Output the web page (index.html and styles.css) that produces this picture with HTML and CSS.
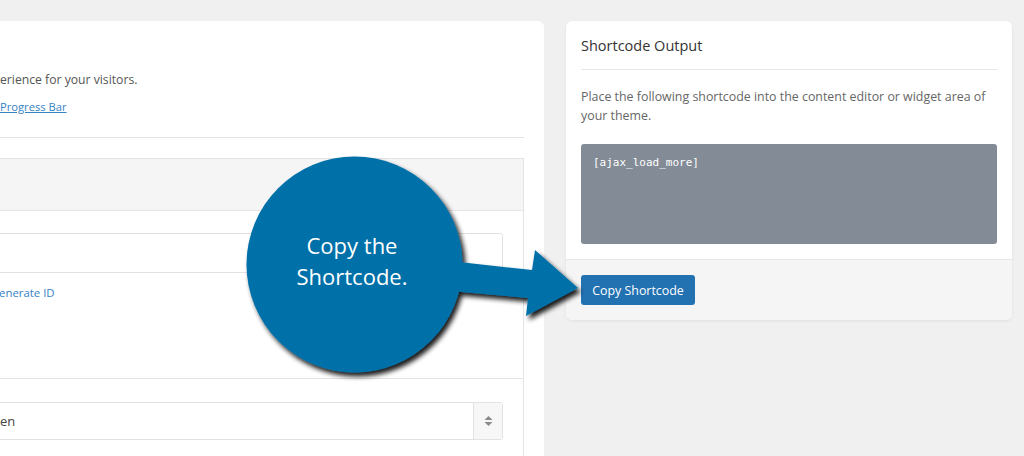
FILE: index.html
```html
<!DOCTYPE html>
<html lang="en">
<head>
<meta charset="utf-8">
<title>Shortcode Output</title>
<link rel="stylesheet" href="styles.css">
</head>
<body>
<div class="page">
  <section class="panel main">
    <p class="intro">erience for your visitors.</p>
    <p class="links"><a href="#">Progress Bar</a></p>
    <hr class="rule">
    <div class="box">
      <div class="box-head"></div>
      <div class="box-body first">
        <div class="input"></div>
        <a class="gen" href="#">enerate ID</a>
      </div>
      <div class="box-body second">
        <div class="select">
          <span class="sel-value">en</span>
          <span class="sel-arrows">
            <svg width="9" height="10" viewBox="0 0 9 10"><path d="M4.5 0 L8.5 4 H0.5 Z M0.5 6 H8.5 L4.5 10 Z" fill="#8a8a8a"/></svg>
          </span>
        </div>
      </div>
    </div>
  </section>
  <aside class="panel output">
    <div class="out-body">
      <h2 class="out-title">Shortcode Output</h2>
      <p class="out-text">Place the following shortcode into the content editor or widget area of your theme.</p>
      <pre class="code">[ajax_load_more]</pre>
    </div>
    <div class="out-foot">
      <button class="copy-btn" type="button">Copy Shortcode</button>
    </div>
  </aside>
</div>
<svg class="callout" width="1024" height="456" viewBox="0 0 1024 456">
  <defs>
    <filter id="sh" x="-20%" y="-20%" width="150%" height="150%">
      <feGaussianBlur in="SourceAlpha" stdDeviation="2.5"/>
      <feOffset dx="3" dy="4" result="b"/>
      <feComponentTransfer><feFuncA type="linear" slope="0.9"/></feComponentTransfer>
      <feMerge><feMergeNode/><feMergeNode in="SourceGraphic"/></feMerge>
    </filter>
  </defs>
  <g filter="url(#sh)" fill="#0070a8">
    <polygon points="450,261 532,270 535,250 578,288 526,316 528,298 450,291"/>
    <circle cx="354.5" cy="264.5" r="108"/>
  </g>
  <text class="callout-text" x="352" y="254" text-anchor="middle">Copy the</text>
  <text class="callout-text" x="352" y="285" text-anchor="middle">Shortcode.</text>
</svg>
</body>
</html>
```
FILE: styles.css
```css
html, body {
  margin: 0;
  padding: 0;
}
body {
  background: #f0f0f0;
  font-family: "Open Sans", "Noto Sans", sans-serif;
  color: #555;
  width: 1024px;
  height: 456px;
  overflow: hidden;
  position: relative;
}
.page {
  display: flex;
  align-items: flex-start;
  gap: 22px;
  padding: 21px 12px 0 0;
  height: 435px;
  overflow: hidden;
}
.panel {
  background: #fff;
}
.main {
  flex: 0 0 524px;
  height: 500px;
  padding: 50px 20px 0 0;
  border-radius: 0 6px 0 0;
}
.intro {
  margin: 0;
  font-size: 12.2px;
  line-height: 18px;
  color: #555;
}
.links {
  margin: 9px 0 0;
  font-size: 11.2px;
  line-height: 18px;
}
.links a, .gen {
  color: #3582c4;
}
.rule {
  margin: 21px 0 0;
  border: 0;
  border-top: 1px solid #e4e4e4;
  height: 0;
}
.box {
  margin: 20px 0 0 -2px;
  border: 1px solid #e4e4e4;
  height: 320px;
}
.box-head {
  height: 51px;
  background: #f5f5f5;
  border-bottom: 1px solid #e4e4e4;
}
.box-body {
  padding: 22px 20px 0 0;
}
.box-body.first {
  height: 145px;
  display: flex;
  flex-direction: column;
  align-items: flex-start;
}
.input {
  align-self: stretch;
  height: 38px;
  margin-left: -2px;
  border: 1px solid #e2e2e2;
  border-radius: 0 3px 3px 0;
  background: #fff;
}
.gen {
  margin-top: 11px;
  font-size: 11.4px;
  line-height: 18px;
  text-decoration: none;
}
.box-body.second {
  border-top: 1px solid #e4e4e4;
  padding-top: 23px;
}
.select {
  display: flex;
  height: 36px;
  margin-left: -2px;
  border: 1px solid #e2e2e2;
  border-radius: 0 3px 3px 0;
}
.sel-value {
  flex: 1;
  padding-left: 2px;
  font-size: 13px;
  line-height: 36px;
  color: #444;
}
.sel-arrows {
  width: 28px;
  border-left: 1px solid #e2e2e2;
  background: #f7f7f7;
  display: flex;
  align-items: center;
  justify-content: center;
}
.output {
  flex: 0 0 446px;
  border-radius: 6px;
  overflow: hidden;
  box-shadow: 0 1px 3px rgba(0, 0, 0, 0.07);
}
.out-body {
  padding: 15px 15px 15px;
}
.out-title {
  margin: 0;
  padding-bottom: 13px;
  border-bottom: 1px solid #e6e6e6;
  font-size: 14.5px;
  line-height: 20px;
  font-weight: 400;
  color: #333;
}
.out-text {
  margin: 17px 0 0;
  font-size: 12.4px;
  line-height: 19px;
  color: #666;
}
.code {
  margin: 19px 0 0;
  height: 76px;
  padding: 12px;
  background: #838b96;
  border-radius: 3px;
  font-family: "DejaVu Sans Mono", "Liberation Mono", monospace;
  font-size: 11px;
  line-height: 14px;
  font-weight: 400;
  color: #fff;
}
.out-foot {
  border-top: 1px solid #e6e6e6;
  background: #f5f5f5;
  padding: 15px;
}
.copy-btn {
  display: block;
  height: 30px;
  width: 114px;
  padding: 0;
  border: 0;
  border-radius: 3px;
  background: #2271b1;
  color: #fff;
  font-family: "Open Sans", "Noto Sans", sans-serif;
  font-size: 12.4px;
}
.callout {
  position: absolute;
  left: 0;
  top: 0;
  pointer-events: none;
}
.callout-text {
  font-family: "Open Sans", "Noto Sans", sans-serif;
  font-size: 22px;
  fill: #fff;
}
```
